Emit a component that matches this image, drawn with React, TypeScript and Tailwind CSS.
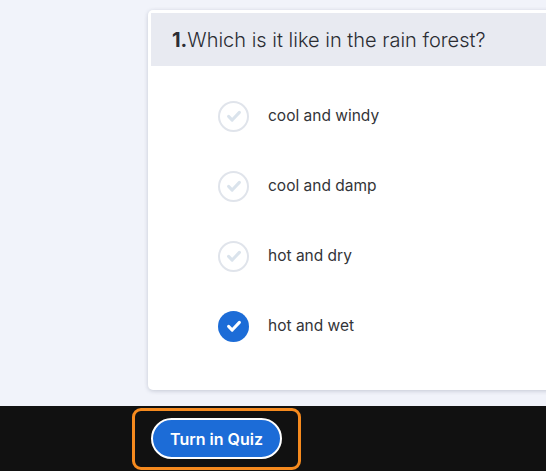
const options = [
  { label: 'cool and windy', selected: false },
  { label: 'cool and damp', selected: false },
  { label: 'hot and dry', selected: false },
  { label: 'hot and wet', selected: true },
]

function CheckCircle({ selected }: { selected: boolean }) {
  if (selected) {
    return (
      <span className="flex h-[31px] w-[31px] shrink-0 items-center justify-center rounded-full bg-[#1c6cd7]">
        <svg viewBox="0 0 20 20" className="h-[18px] w-[18px]" aria-hidden="true">
          <path d="M4 10.5l4 4 8-8.5" fill="none" stroke="#fff" strokeWidth="3.4" strokeLinecap="round" strokeLinejoin="round" />
        </svg>
      </span>
    )
  }
  return (
    <span className="flex h-[31px] w-[31px] shrink-0 items-center justify-center rounded-full border-2 border-[#e0e4eb] bg-white">
      <svg viewBox="0 0 20 20" className="h-[18px] w-[18px]" aria-hidden="true">
        <path d="M4 10.5l4 4 8-8.5" fill="none" stroke="#dae3ec" strokeWidth="3.4" strokeLinecap="round" strokeLinejoin="round" />
      </svg>
    </span>
  )
}

export default function App() {
  return (
    <div className="flex h-[471px] w-[546px] flex-col overflow-hidden bg-[#f1f3fa] [font-family:Inter,'Noto_Sans',sans-serif]">
      <div className="flex-1 pt-[10px] pl-[148px]">
        <article className="h-[380px] w-[440px] rounded-[5px] bg-white p-[3px] shadow-[0_1px_4px_rgba(40,50,80,0.22)]">
          <header className="flex h-[53px] items-center bg-[#e8eaf1] px-[21px] text-[20px] text-[#2b2d33]">
            <span className="font-bold">1.</span>
            <span className="font-light">Which is it like in the rain forest?</span>
          </header>
          <ul className="pt-[15px] pl-[67px]">
            {options.map((option) => (
              <li key={option.label} className="flex h-[70px] items-center gap-[19px]">
                <CheckCircle selected={option.selected} />
                <span className="text-[15.5px] text-[#333438]">{option.label}</span>
              </li>
            ))}
          </ul>
        </article>
      </div>
      <footer className="flex h-[65px] items-center bg-[#111111] pl-[132px]">
        <div className="flex h-[62px] w-[169px] items-center justify-center rounded-[9px] border-[3px] border-[#f68a1e]">
          <button
            type="button"
            className="h-[41px] w-[131px] rounded-full border-2 border-white bg-[#1c6cd7] text-[16px] font-semibold text-white"
          >
            Turn in Quiz
          </button>
        </div>
      </footer>
    </div>
  )
}
